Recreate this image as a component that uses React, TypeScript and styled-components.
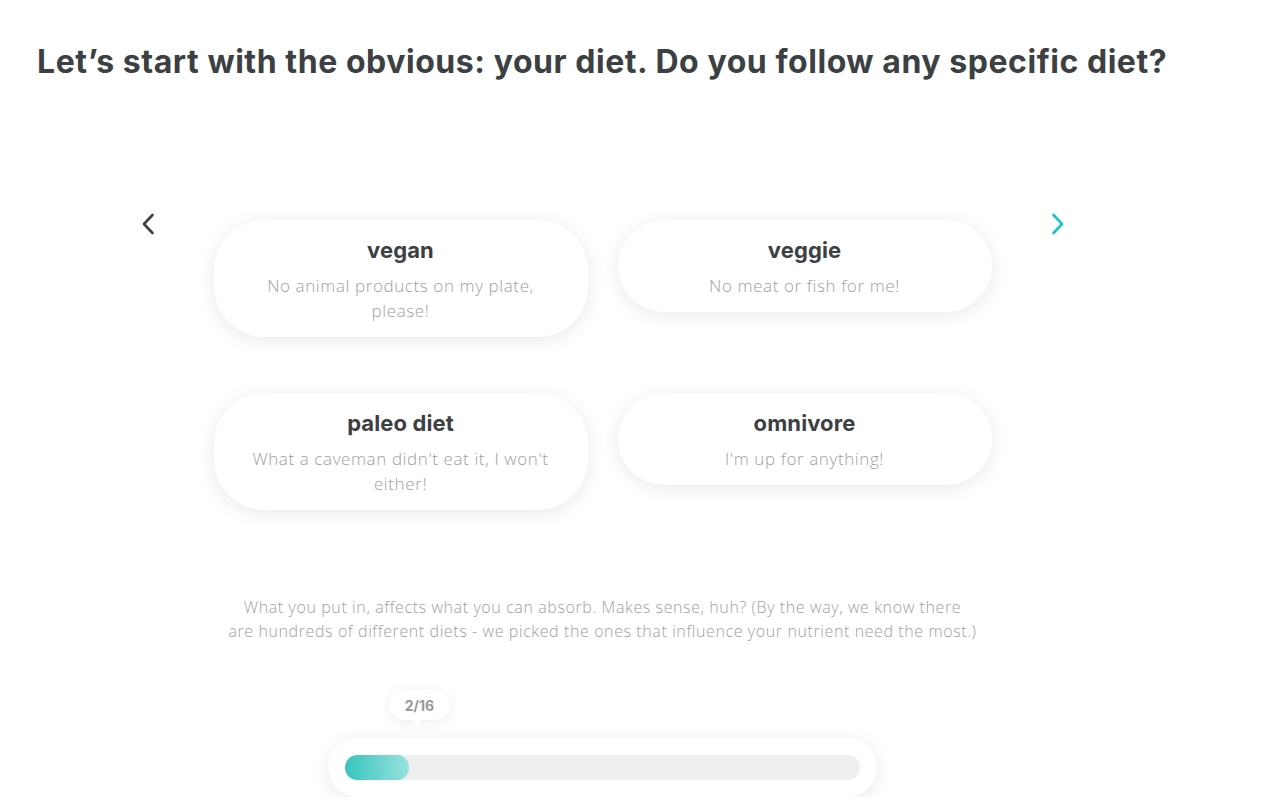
import React from "react";
import styled, { createGlobalStyle } from "styled-components";

const Global = createGlobalStyle`
  html, body { margin: 0; padding: 0; background: #fff; }
  body { font-family: "Open Sans", "Noto Sans", sans-serif; }
  * { box-sizing: border-box; }
`;

const Page = styled.div`
  width: 1205px;
  padding: 40px 0 0 37px;
  display: flex;
  flex-direction: column;
`;

const Heading = styled.h1`
  margin: 0;
  font-family: "Inter", "Noto Sans", sans-serif;
  font-weight: 700;
  font-size: 32px;
  line-height: 44px;
  letter-spacing: 0.55px;
  color: #3c4043;
  white-space: nowrap;
`;

const Content = styled.div`
  width: 1205px;
  margin-left: -37px;
  display: flex;
  flex-direction: column;
  align-items: center;
`;

const Carousel = styled.div`
  margin-top: 136px;
  display: flex;
  align-items: flex-start;
  gap: 46px;
`;

const Arrow = styled.button<{ $color: string }>`
  width: 40px;
  height: 24px;
  margin-top: -8px;
  border: none;
  background: none;
  padding: 0;
  display: flex;
  align-items: center;
  justify-content: center;
  color: ${(p) => p.$color};
  cursor: pointer;
`;

const Grid = styled.div`
  display: grid;
  grid-template-columns: 374px 374px;
  column-gap: 30px;
  row-gap: 56px;
  align-items: start;
`;

const Card = styled.div`
  background: #fff;
  border-radius: 50px;
  box-shadow: 0 3px 18px rgba(0, 0, 0, 0.09);
  padding: 15px 34px 14px;
  text-align: center;
`;

const CardTitle = styled.div`
  font-family: "Inter", "Noto Sans", sans-serif;
  font-weight: 700;
  font-size: 22px;
  line-height: 30px;
  color: #3c4043;
  letter-spacing: 0.1px;
`;

const CardText = styled.div`
  font-family: "Open Sans", "Noto Sans", sans-serif;
  font-weight: 300;
  font-size: 17px;
  line-height: 25px;
  letter-spacing: 0.6px;
  color: #a0a0a0;
  margin-top: 8px;
`;

const Note = styled.p`
  margin: 85px 0 0;
  text-align: center;
  font-family: "Open Sans", "Noto Sans", sans-serif;
  font-weight: 300;
  font-size: 16px;
  line-height: 24px;
  letter-spacing: 0.6px;
  color: #a0a0a0;
  white-space: nowrap;
`;

const ProgressWrap = styled.div`
  margin-top: 47px;
  width: 549px;
  display: flex;
  flex-direction: column;
`;

const Bubble = styled.div`
  position: relative;
  margin-left: 61px;
  width: 61px;
  height: 30px;
  border-radius: 15px;
  background: #fff;
  box-shadow: 0 2px 12px rgba(0, 0, 0, 0.08);
  display: flex;
  align-items: center;
  justify-content: center;
  font-family: "Inter", "Noto Sans", sans-serif;
  font-weight: 700;
  font-size: 14px;
  color: #999999;
  &::after {
    content: "";
    position: absolute;
    left: 23px;
    bottom: -6px;
    width: 0;
    height: 0;
    border-left: 5px solid transparent;
    border-right: 5px solid transparent;
    border-top: 6px solid #fff;
  }
`;

const Track = styled.div`
  margin-top: 18px;
  height: 59px;
  border-radius: 30px;
  background: #fff;
  box-shadow: 0 3px 18px rgba(0, 0, 0, 0.09);
  padding: 17px;
`;

const Bar = styled.div`
  height: 25px;
  border-radius: 12px;
  background: #efefef;
  overflow: hidden;
`;

const Fill = styled.div`
  height: 100%;
  border-radius: 12px;
  background: linear-gradient(90deg, #38c4bd 0%, #97e2de 100%);
`;

const Chevron = ({ dir }: { dir: "left" | "right" }) => (
  <svg width="14" height="22" viewBox="0 0 14 22" fill="none">
    <path
      d={dir === "left" ? "M11.5 2 L3 11 L11.5 20" : "M2.5 2 L11 11 L2.5 20"}
      stroke="currentColor"
      strokeWidth="2.6"
      strokeLinecap="round"
      strokeLinejoin="round"
    />
  </svg>
);

const diets = [
  { title: "vegan", text: "No animal products on my plate, please!" },
  { title: "veggie", text: "No meat or fish for me!" },
  { title: "paleo diet", text: "What a caveman didn't eat it, I won't either!" },
  { title: "omnivore", text: "I'm up for anything!" },
];

export default function App() {
  const progress = 2 / 16;
  return (
    <>
      <Global />
      <Page>
        <Heading>Let’s start with the obvious: your diet. Do you follow any specific diet?</Heading>
        <Content>
          <Carousel>
            <Arrow $color="#3a3f44" aria-label="previous">
              <Chevron dir="left" />
            </Arrow>
            <Grid>
              {diets.map((d) => (
                <Card key={d.title}>
                  <CardTitle>{d.title}</CardTitle>
                  <CardText>{d.text}</CardText>
                </Card>
              ))}
            </Grid>
            <Arrow $color="#1cc2d2" aria-label="next">
              <Chevron dir="right" />
            </Arrow>
          </Carousel>
          <Note>
            What you put in, affects what you can absorb. Makes sense, huh? (By the way, we know there
            <br />
            are hundreds of different diets - we picked the ones that influence your nutrient need the most.)
          </Note>
          <ProgressWrap>
            <Bubble>2/16</Bubble>
            <Track>
              <Bar>
                <Fill style={{ width: `${progress * 100}%` }} />
              </Bar>
            </Track>
          </ProgressWrap>
        </Content>
      </Page>
    </>
  );
}
